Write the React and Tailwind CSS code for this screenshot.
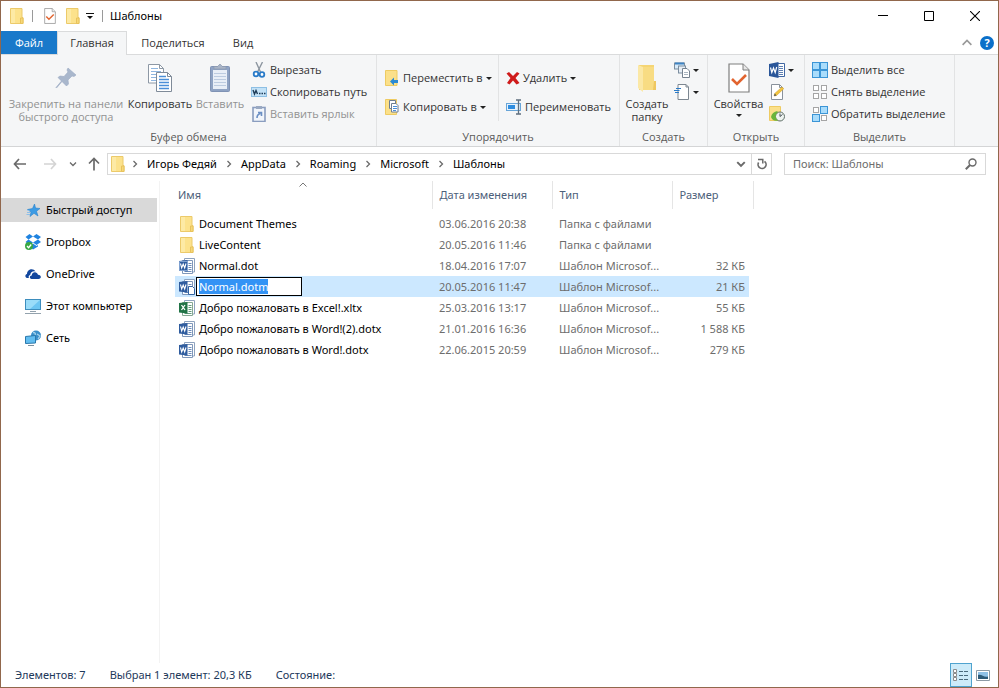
import React, { useEffect, useRef } from "react";

/* ---------- icons ---------- */

function Folder({ className = "h-4 w-3.5" }) {
  return (
    <svg viewBox="0 0 14 16" className={className} aria-hidden="true">
      <path d="M0.500 0.500h11.500v9h1v6H0.500z" fill="#fce28c" stroke="#ecca6a" />
      <path d="M1 1h4v14H1z" fill="#fdeaa5" />
      <path d="M10.500 10h2.500v5.500h-2.500z" fill="#f6d878" stroke="#e8c25c" />
    </svg>
  );
}

function BigFolder() {
  return (
    <svg viewBox="0 0 20 30" className="h-[30px] w-5" aria-hidden="true">
      <path d="M2 2h15v17h2v8H2z" fill="#f5d574" />
      <path d="M1 2l5 2v25l-5-4z" fill="#fbe8a6" />
      <path d="M6 4h11v15l2 1v7H6z" fill="#f8dc83" />
      <path d="M17 18h2v9h-3z" fill="#efc75f" />
    </svg>
  );
}

function CheckDoc({ className }) {
  return (
    <svg viewBox="0 0 22 30" className={className} aria-hidden="true">
      <path d="M1 1h14l6 6v22H1z" fill="#fff" stroke="#7e7e7e" strokeWidth="1.2" />
      <path d="M15 1v6h6" fill="#e8e8e8" stroke="#7e7e7e" />
      <path d="M4 16l5 5 9-9" fill="none" stroke="#e2642f" strokeWidth="2.6" />
    </svg>
  );
}

function Pin() {
  return (
    <svg viewBox="0 0 22 22" className="h-[22px] w-[22px]" aria-hidden="true">
      <path d="M13 1l8 7-2 1.500-2-.5-4 4 .5 4-2 2-4.500-4.500L1.500 21 1 20.500l5.500-6.500L3 10.500l2-1.500 4 .5 4-4.500-1-2z" fill="#a9b7cc" stroke="#9aa9c2" strokeWidth=".6" />
    </svg>
  );
}

function CopyBig() {
  return (
    <svg viewBox="0 0 26 30" className="h-[30px] w-[26px]" aria-hidden="true">
      <path d="M1.500 1.500h11l4 4v14.500h-15z" fill="#fff" stroke="#8d98a5" />
      <path d="M12.500 1.500v4h4" fill="none" stroke="#8d98a5" />
      <path d="M4 5.500h7M4 8.500h10M4 11.500h6M4 14.500h5M4 17.500h5" stroke="#8fb6e0" />
      <path d="M9.500 9.500h11l4 4v15h-15z" fill="#fff" stroke="#7f8b99" />
      <path d="M20.500 9.500v4h4" fill="none" stroke="#7f8b99" />
      <path d="M12 13.500h7M12 16.500h10M12 19.500h10M12 22.500h10M12 25.500h10" stroke="#4b8fd8" strokeWidth="1.300" />
    </svg>
  );
}

function PasteBig() {
  return (
    <svg viewBox="0 0 22 30" className="h-[30px] w-[22px]" aria-hidden="true">
      <rect x="1.500" y="3.500" width="19" height="25" rx="1" fill="#8fa3c4" stroke="#8093b5" />
      <rect x="4" y="7" width="14" height="19" fill="#e8eef7" />
      <path d="M5 10.500h12M5 13.500h12M5 16.500h12M5 19.500h12M5 22.500h12" stroke="#bccbe0" />
      <path d="M5 6V3.500h3.500L11 1l2.500 2.500H17V6z" fill="#a9b4c6" stroke="#8b99b0" strokeWidth=".7" />
    </svg>
  );
}

function Scissors() {
  return (
    <svg viewBox="0 0 16 16" className="size-4" aria-hidden="true">
      <path d="M5 0l4.500 10M11.500 0L6.500 10" stroke="#8d96a0" strokeWidth="1.400" fill="none" />
      <circle cx="5" cy="12" r="2.300" fill="#fff" stroke="#2a7bc8" strokeWidth="1.800" />
      <circle cx="11" cy="12.500" r="2.300" fill="#fff" stroke="#2a7bc8" strokeWidth="1.800" />
    </svg>
  );
}

function PathIcon() {
  return (
    <svg viewBox="0 0 16 16" className="size-4" aria-hidden="true">
      <rect x="0.500" y="3.500" width="15" height="9" fill="#c3e2f7" stroke="#8dbfe4" />
      <path d="M2 6l1.500 4L5 6.500 6.500 10" fill="none" stroke="#1d3b57" strokeWidth="1.400" />
      <path d="M8 9.500h1.500M10.500 9.500H12M13 9.500h1.500" stroke="#1d3b57" strokeWidth="1.500" />
    </svg>
  );
}

function PasteLink() {
  return (
    <svg viewBox="0 0 16 16" className="size-4" aria-hidden="true">
      <rect x="2" y="1.500" width="12" height="14" fill="#f1f5fb" stroke="#8a9dbf" strokeWidth="1.600" />
      <path d="M5 0h6v3H5z" fill="#9aa9c2" />
      <path d="M6 12c0-2.500 1-4 3.500-4.500M7 6.500h3.500v3.500" fill="none" stroke="#6b8fc4" strokeWidth="1.600" />
    </svg>
  );
}

function MoveTo() {
  return (
    <svg viewBox="0 0 16 16" className="size-4" aria-hidden="true">
      <path d="M1.500 .5h11.500v15H1.500z" fill="#fbe08a" stroke="#eecb62" />
      <path d="M6 11.500L10 7.500v2.500h4v3h-4v2.500z" fill="#2a8ad4" />
    </svg>
  );
}

function CopyTo() {
  return (
    <svg viewBox="0 0 16 16" className="size-4" aria-hidden="true">
      <path d="M1.500 .5h11v15h-11z" fill="#fbe08a" stroke="#eecb62" />
      <path d="M5.500 1.500h6v8h-6z" fill="#fff" stroke="#6e7f92" />
      <path d="M7.500 4.500h4.500l2 2v6.500h-6.500z" fill="#fff" stroke="#6e7f92" />
      <path d="M9 7.500h4M9 9.500h4M9 11.500h3" stroke="#4b8fd8" />
    </svg>
  );
}

function DeleteX() {
  return (
    <svg viewBox="0 0 14 14" className="size-3.5" aria-hidden="true">
      <path d="M3 1l4 4 4-4 2.500 1.500L9.500 7l4 5-3 1.500L7 9.500 3.500 13.500 1 12l3.500-5L.5 2.500z" fill="#cf1b1b" />
    </svg>
  );
}

function Rename() {
  return (
    <svg viewBox="0 0 16 16" className="size-4" aria-hidden="true">
      <rect x="0.500" y="4.500" width="14" height="7" fill="#e6f2fc" stroke="#68a5d8" />
      <rect x="2" y="6" width="7" height="4" fill="#2f8de0" />
      <path d="M10 1h5M10 15h5M12.500 1v14" stroke="#5f6f7f" strokeWidth="1.300" />
    </svg>
  );
}

function NewItem() {
  return (
    <svg viewBox="0 0 16 16" className="size-4" aria-hidden="true">
      <rect x="0.500" y="1" width="10" height="6" fill="#d8ebfa" stroke="#7b8d9f" />
      <path d="M1 1.500h9" stroke="#3e83c2" strokeWidth="2" />
      <rect x="4.500" y="4" width="7" height="7" fill="#e7eef5" stroke="#7b8d9f" />
      <path d="M8.500 6.500h4.500l2.500 2.500v6.500h-7z" fill="#fff" stroke="#76828f" />
      <path d="M10 10.500h4M10 12.500h4" stroke="#aab5c0" />
    </svg>
  );
}

function EasyAccess() {
  return (
    <svg viewBox="0 0 16 16" className="size-4" aria-hidden="true">
      <path d="M4 .5h8l2.500 2.500v12.500H4z" fill="#fff" stroke="#7d8791" />
      <path d="M12 .5v2.500h2.500" fill="none" stroke="#7d8791" />
      <path d="M2 4.500h5M0 6.500h5.500M1 8.500h4" stroke="#2a7bc8" strokeWidth="1.200" />
    </svg>
  );
}

function EditDoc() {
  return (
    <svg viewBox="0 0 16 16" className="size-4" aria-hidden="true">
      <path d="M2.500.5h8l3 3v12h-11z" fill="#fff" stroke="#8a929b" />
      <path d="M10.500.5v3h3" fill="none" stroke="#8a929b" />
      <path d="M5 12l.8-2.600L13 3l1.800 1.700L7.500 11.500z" fill="#f3c53d" stroke="#c9982a" strokeWidth=".5" />
      <path d="M5 12l.8-2.600 1.700 2z" fill="#555" />
    </svg>
  );
}

function HistoryIcon() {
  return (
    <svg viewBox="0 0 16 16" className="size-4" aria-hidden="true">
      <path d="M.5.5h11v14H.5z" fill="#fbe08a" stroke="#eecb62" />
      <circle cx="11" cy="10.500" r="4.500" fill="#eef3f0" stroke="#5f6f68" />
      <path d="M11 10.500l2.500-2M11 10.500V7.500" stroke="#4a545c" />
      <path d="M2 11C2.500 7.500 5 5.500 8.500 5v2C7 8 6.500 9.500 6.800 11c.2 1.500 1 2.500 2.200 3.500C5.500 15.500 3 14 2 11z" fill="#6ab53c" />
    </svg>
  );
}

function WordIcon() {
  return (
    <svg viewBox="0 0 16 16" className="size-4" aria-hidden="true">
      <path d="M8 1.500h7.500v13H8z" fill="#fff" stroke="#2a5699" strokeWidth=".9" />
      <path d="M10 4.500h4M10 6.500h4M10 8.500h4M10 10.500h4M10 12.500h4" stroke="#2a5699" opacity=".75" />
      <path d="M0 2l9.500-2v16L0 14z" fill="#2a5699" />
      <path d="M1.500 5.500l1.300 5 1.700-4.500 1.700 4.500 1.500-5.500" fill="none" stroke="#fff" strokeWidth="1.200" />
    </svg>
  );
}

function TemplateIcon({ kind }) {
  const dark = kind === "excel" ? "#217346" : "#2f5c9e";
  return (
    <svg viewBox="0 0 16 16" className="size-4 shrink-0" aria-hidden="true">
      <path d="M5.500.5h10v13.500h-10z" fill="#fff" stroke="#8ea3bf" />
      <path d="M3.500 2.500h10v13h-10z" fill="#fff" stroke={kind === "excel" ? "#86a894" : "#7f97ba"} />
      <path d="M9.500 5.500h3M9.500 7.500h3M9.500 9.500h3M9.500 11.500h3M5.500 13.500h7" stroke={dark} opacity=".7" />
      <path d="M0 3l8.500-1v11.500L0 12.500z" fill={dark} />
      {kind === "excel" ? (
        <path d="M2.500 5l3.500 5M6 5l-3.500 5" stroke="#fff" strokeWidth="1.300" />
      ) : (
        <path d="M1.500 5.500l1.200 4.500 1.500-4 1.500 4L7 5.500" fill="none" stroke="#fff" strokeWidth="1.100" />
      )}
      {kind === "macro" && <path d="M9.500 7.500h4l2 2v6h-6z" fill="#fff" stroke="#3465a4" />}
      {kind === "old" && <path d="M.5 3.500h8v9h-8z" fill="none" stroke="#7ea0d0" />}
    </svg>
  );
}

function GridIcon({ mode }) {
  const on = (i) => mode === "all" || (mode === "invert" && (i === 1 || i === 2));
  return (
    <svg viewBox="0 0 16 16" className="size-4" aria-hidden="true">
      {[0, 1, 2, 3].map((i) => {
        const big = on(i);
        const s = big ? 7 : 5;
        const x = (i % 2) * 8 + (big ? 0.5 : 1.5);
        const y = Math.floor(i / 2) * 8 + (big ? 0.5 : 1.5);
        return <rect key={i} x={x} y={y} width={s} height={s} fill={big ? "#a9dcfb" : "#fff"} stroke={big ? "#3b95d6" : "#a5a5a5"} />;
      })}
    </svg>
  );
}

function Star() {
  return (
    <svg viewBox="0 0 16 16" className="size-4" aria-hidden="true">
      <path d="M9.500 2l1 4 4.500.5-3.500 2.700 1.500 4.800-4-2.700L5 14.500l1-4.500-3.500-2.500L7.500 6.500z" fill="#3c9be4" stroke="#2782cc" strokeWidth=".6" />
      <path d="M2 10.500h3.500M1.500 12.500h3.500M2.500 8.500h2" stroke="#8dbfe8" />
    </svg>
  );
}

function DropboxIcon() {
  return (
    <svg viewBox="0 0 16 16" className="size-4" aria-hidden="true">
      <path d="M4.500 0L8 2.500 3.500 5.500.5 3zM11.500 0L16 3l-3 2.500L8 2.500zM.5 8l3-2.500L8 8.500 4.500 11zM16 8l-3-2.500-5 3 3.500 2.500zM8 9.500l3.500 2.500 1.500-1v1.500L8 15.500 5 13z" fill="#1f83e0" />
      <circle cx="4" cy="12" r="4" fill="#39a845" />
      <path d="M2 12l1.600 1.700L6.200 10.500" fill="none" stroke="#fff" strokeWidth="1.300" />
    </svg>
  );
}

function CloudIcon() {
  return (
    <svg viewBox="0 0 16 16" className="size-4" aria-hidden="true">
      <path d="M2 12C0 11.500-.3 8.500 2 8 2 3.500 8 1.500 10.500 5.500 7.500 4.800 5.500 6.500 5.200 9 3.500 9.500 3.300 11.300 4 12z" fill="#12479e" />
      <path d="M6.500 13c-2.500-.3-2-3.500.2-3.500C7 5.500 12 5 13 8.800c3.700 0 3.700 4.200.5 4.200z" fill="#12479e" />
    </svg>
  );
}

function ComputerIcon() {
  return (
    <svg viewBox="0 0 16 16" className="size-4" aria-hidden="true">
      <rect x=".5" y="1.500" width="15" height="10" fill="#6cc5f2" stroke="#3d8dbd" />
      <path d="M1 2h14L5 11H1z" fill="#9adcf9" />
      <path d="M5 13.500h6M0 15.500h16" stroke="#93a2ad" />
    </svg>
  );
}

function NetworkIcon() {
  return (
    <svg viewBox="0 0 16 16" className="size-4" aria-hidden="true">
      <circle cx="11" cy="5.500" r="5" fill="#3a8fc9" />
      <path d="M8 2.500c2 0 3 1 2 2.500M12 4l3 2-2 3" stroke="#a7d3ec" fill="none" strokeWidth="1.300" />
      <path d="M.5 6.500l10-1v7.500l-10 .5z" fill="#62bdf0" stroke="#2a78ac" />
      <path d="M3 15.500h6" stroke="#7d909e" />
    </svg>
  );
}

function Caret() {
  return (
    <svg viewBox="0 0 6 3" className="h-[3px] w-[6px]" aria-hidden="true">
      <path d="M0 0h6L3 3z" fill="#222" />
    </svg>
  );
}

function Chevron({ dir = "right", className = "size-2", weight = 1.3 }) {
  const d = { right: "M2.500 1l3 3-3 3", down: "M1 2.500l3 3 3-3", up: "M0.500 5.500L4 2l3.500 3.500" }[dir];
  return (
    <svg viewBox="0 0 8 8" className={className} aria-hidden="true">
      <path d={d} fill="none" stroke="currentColor" strokeWidth={weight} />
    </svg>
  );
}

function Arrow({ d }) {
  return (
    <svg viewBox="0 0 14 14" className="size-3.5" aria-hidden="true">
      <path d={d} fill="none" stroke="currentColor" strokeWidth="1.700" />
    </svg>
  );
}

/* ---------- ribbon parts ---------- */

function Group({ label, className, children }) {
  return (
    <section className={`flex shrink-0 flex-col border-r border-[#e2e3e4] ${className}`} aria-label={label}>
      <div className="flex h-[74px] items-start">{children}</div>
      <div className="text-center leading-4 text-[#5a5a5a]">{label}</div>
    </section>
  );
}

function BigButton({ icon, label, className, disabled, caret }) {
  return (
    <button type="button" disabled={disabled} className={`flex shrink-0 flex-col items-center pt-2 leading-[13px] ${disabled ? "text-[#929292]" : "text-[#333]"} ${className}`}>
      <span className="flex h-[34px] items-start justify-center">{icon}</span>
      <span>{label}</span>
      {caret && (
        <span className="pt-1">
          <Caret />
        </span>
      )}
    </button>
  );
}

function SmallButton({ icon, label, disabled, caret, name }) {
  return (
    <button type="button" disabled={disabled} aria-label={name} className={`flex h-[22px] items-center gap-[3px] whitespace-nowrap ${disabled ? "text-[#929292]" : "text-[#333]"}`}>
      {icon}
      {label && <span>{label}</span>}
      {caret && <Caret />}
    </button>
  );
}

/* ---------- data ---------- */

const crumbs = ["Игорь Федяй", "AppData", "Roaming", "Microsoft", "Шаблоны"];

const places = [
  { name: "Быстрый доступ", icon: <Star />, active: true },
  { name: "Dropbox", icon: <DropboxIcon /> },
  { name: "OneDrive", icon: <CloudIcon /> },
  { name: "Этот компьютер", icon: <ComputerIcon /> },
  { name: "Сеть", icon: <NetworkIcon /> },
];

const files = [
  { name: "Document Themes", date: "03.06.2016 20:38", type: "Папка с файлами", size: "", kind: "folder" },
  { name: "LiveContent", date: "20.05.2016 11:46", type: "Папка с файлами", size: "", kind: "folder" },
  { name: "Normal.dot", date: "18.04.2016 17:07", type: "Шаблон Microsof...", size: "32 КБ", kind: "old" },
  { name: "Normal.dotm", date: "20.05.2016 11:47", type: "Шаблон Microsof...", size: "21 КБ", kind: "macro", editing: true },
  { name: "Добро пожаловать в Excel!.xltx", date: "25.03.2016 13:17", type: "Шаблон Microsof...", size: "55 КБ", kind: "excel" },
  { name: "Добро пожаловать в Word!(2).dotx", date: "21.01.2016 16:36", type: "Шаблон Microsof...", size: "1 588 КБ", kind: "word" },
  { name: "Добро пожаловать в Word!.dotx", date: "22.06.2015 20:59", type: "Шаблон Microsof...", size: "279 КБ", kind: "word" },
];

function RenameBox({ value }) {
  const ref = useRef(null);
  useEffect(() => {
    ref.current.focus();
    ref.current.select();
  }, []);
  return (
    <input
      ref={ref}
      aria-label="Новое имя файла"
      defaultValue={value}
      className="h-[19px] w-[106px] border border-black bg-white px-0.5 text-black outline-none selection:bg-[#3393f5] selection:text-white"
    />
  );
}

/* ---------- window ---------- */

export default function App() {
  return (
    <div className="flex min-h-screen flex-col overflow-hidden border border-[#91674c] bg-white font-['Noto_Sans','Open_Sans',sans-serif] text-[11px] leading-4 text-black">
      <header className="flex h-[30px] items-center">
        <div className="flex items-center pl-[9px]">
          <Folder />
          <span className="ml-2 h-3 w-px bg-[#9a9a9a]" />
          <button type="button" aria-label="Свойства" className="ml-[11px]">
            <CheckDoc className="h-4 w-3" />
          </button>
          <button type="button" aria-label="Новая папка" className="ml-2.5">
            <Folder />
          </button>
          <button type="button" aria-label="Настройка панели быстрого доступа" className="ml-1.5">
            <svg viewBox="0 0 8 8" className="size-2" aria-hidden="true">
              <path d="M0 1.500h8" stroke="#111" />
              <path d="M1 4h6L4 7z" fill="#111" />
            </svg>
          </button>
          <span className="ml-2 h-3 w-px bg-[#9a9a9a]" />
        </div>
        <h1 className="pl-[7px]">Шаблоны</h1>
        <div className="ml-auto flex h-full">
          <button type="button" aria-label="Свернуть" className="flex w-[46px] items-center justify-center">
            <svg viewBox="0 0 10 10" className="size-2.5"><path d="M0 4.500h10" stroke="#000" /></svg>
          </button>
          <button type="button" aria-label="Развернуть" className="flex w-[46px] items-center justify-center">
            <svg viewBox="0 0 10 10" className="size-2.5"><path d="M.5.5h9v9h-9z" fill="none" stroke="#000" /></svg>
          </button>
          <button type="button" aria-label="Закрыть" className="flex w-[46px] items-center justify-center">
            <svg viewBox="0 0 10 10" className="size-2.5"><path d="M0 0l10 10M10 0L0 10" stroke="#000" strokeWidth="1.100" /></svg>
          </button>
        </div>
      </header>

      <div className="font-['Open_Sans','Noto_Sans',sans-serif]">
        <nav className="flex h-6 items-stretch border-b border-[#dadbdc] text-[#333]" aria-label="Лента">
          <button type="button" className="w-14 bg-[#1979ca] text-white">Файл</button>
          <button type="button" className="-mb-px w-[70px] border border-b-0 border-[#dadbdc] bg-[#f5f6f7] pb-0.5">Главная</button>
          <button type="button" className="w-[92px]">Поделиться</button>
          <button type="button" className="w-12">Вид</button>
          <div className="ml-auto flex items-center gap-2 pr-1">
            <button type="button" aria-label="Свернуть ленту" className="text-[#999]">
              <Chevron dir="up" className="size-2.5" />
            </button>
            <button type="button" aria-label="Справка" className="flex size-3.5 items-center justify-center rounded-full bg-[#0a6fc9] font-bold text-white">
              ?
            </button>
          </div>
        </nav>

        <div className="flex h-[92px] overflow-hidden border-b border-[#d4d5d6] bg-[#f5f6f7]">
          <Group label="Буфер обмена" className="w-[376px]">
            <BigButton className="w-[130px] px-1" disabled icon={<span className="pt-1"><Pin /></span>} label="Закрепить на панели быстрого доступа" />
            <BigButton className="w-[58px] whitespace-nowrap" icon={<CopyBig />} label="Копировать" />
            <BigButton className="w-[62px]" disabled icon={<PasteBig />} label="Вставить" />
            <div className="pt-1">
              <SmallButton icon={<Scissors />} label="Вырезать" />
              <SmallButton icon={<PathIcon />} label="Скопировать путь" />
              <SmallButton icon={<PasteLink />} label="Вставить ярлык" disabled />
            </div>
          </Group>
          <Group label="Упорядочить" className="w-[243px]">
            <div className="flex h-[66px] w-[122px] flex-col gap-[7px] border-r border-[#e2e3e4] pl-[7px] pt-3">
              <SmallButton icon={<MoveTo />} label="Переместить в" caret />
              <SmallButton icon={<CopyTo />} label="Копировать в" caret />
            </div>
            <div className="flex flex-col gap-[7px] pl-[7px] pt-3">
              <SmallButton icon={<DeleteX />} label="Удалить" caret />
              <SmallButton icon={<Rename />} label="Переименовать" />
            </div>
          </Group>
          <Group label="Создать" className="w-[88px]">
            <BigButton className="w-[54px]" icon={<BigFolder />} label="Создать папку" />
            <div className="pt-1">
              <SmallButton icon={<NewItem />} name="Создать элемент" caret />
              <SmallButton icon={<EasyAccess />} name="Простой доступ" caret />
            </div>
          </Group>
          <Group label="Открыть" className="w-[97px]">
            <BigButton className="w-[61px]" icon={<CheckDoc className="h-[30px] w-[22px]" />} label="Свойства" caret />
            <div className="pt-1">
              <SmallButton icon={<WordIcon />} name="Открыть" caret />
              <SmallButton icon={<EditDoc />} name="Изменить" />
              <SmallButton icon={<HistoryIcon />} name="Журнал" />
            </div>
          </Group>
          <Group label="Выделить" className="w-[150px]">
            <div className="pl-[7px] pt-1">
              <SmallButton icon={<GridIcon mode="all" />} label="Выделить все" />
              <SmallButton icon={<GridIcon mode="none" />} label="Снять выделение" />
              <SmallButton icon={<GridIcon mode="invert" />} label="Обратить выделение" />
            </div>
          </Group>
        </div>
      </div>

      <div className="flex h-[34px] items-center pl-3 pr-3 text-[#6a6a6a]">
        <button type="button" aria-label="Назад"><Arrow d="M13 7H1.500M6 2L1.500 7 6 12" /></button>
        <button type="button" aria-label="Вперёд" className="ml-4 text-[#d4d4d4]"><Arrow d="M1 7h11.500M8 2l4.500 5L8 12" /></button>
        <button type="button" aria-label="Последние расположения" className="ml-3"><Chevron dir="down" /></button>
        <button type="button" aria-label="Вверх" className="ml-2.5"><Arrow d="M7 13.500V1.500M2 6.500L7 1.500l5 5" /></button>
        <div className="ml-1.5 flex h-[22px] flex-1 items-stretch border border-[#d9d9d9]">
          <div className="flex flex-1 items-center gap-1.5 pl-[3px]">
            <Folder />
            <div className="flex items-center gap-2">
              {crumbs.map((c) => (
                <React.Fragment key={c}>
                  <Chevron />
                  <a href="#" className="text-black">{c}</a>
                </React.Fragment>
              ))}
            </div>
          </div>
          <button type="button" aria-label="Предыдущие расположения" className="flex w-[21px] items-center justify-center">
            <Chevron dir="down" className="size-2.5" weight={1.6} />
          </button>
          <button type="button" aria-label="Обновить" className="flex w-5 items-center justify-center border-l border-[#d9d9d9]">
            <svg viewBox="0 0 12 12" className="size-3">
              <path d="M2.600 4.500A4 4 0 1 0 8.500 3.300" fill="none" stroke="currentColor" strokeWidth="1.600" />
              <path d="M2 1.500h5.500M6.800 1.500v4" fill="none" stroke="currentColor" strokeWidth="1.500" />
            </svg>
          </button>
        </div>
        <label className="ml-3 flex h-[22px] w-[202px] items-center border border-[#d9d9d9] px-2">
          <input type="search" aria-label="Поиск" placeholder="Поиск: Шаблоны" className="min-w-0 flex-1 bg-transparent outline-none placeholder:text-[#6d6d6d]" />
          <svg viewBox="0 0 12 12" className="size-3" aria-hidden="true">
            <circle cx="7.500" cy="4.500" r="3.500" fill="none" stroke="#6a6a6a" strokeWidth="1.400" />
            <path d="M5 7L.8 11.200" stroke="#6a6a6a" strokeWidth="2" />
          </svg>
        </label>
      </div>

      <main className="flex flex-1">
        <aside className="w-[159px] shrink-0 border-r border-[#f3f3f3] pr-0.5 pt-[17px]">
          <ul className="flex flex-col gap-2">
            {places.map((p) => (
              <li key={p.name}>
                <a href="#" className={`flex h-6 items-center gap-[5px] pl-6 ${p.active ? "bg-[#d9d9d9]" : ""}`}>
                  {p.icon}
                  <span>{p.name}</span>
                </a>
              </li>
            ))}
          </ul>
        </aside>

        <div className="min-w-0 flex-1 pl-[15px]">
          <table className="w-[578px] table-fixed border-collapse text-left">
            <colgroup>
              <col className="w-[257px]" />
              <col className="w-[120px]" />
              <col className="w-[120px]" />
              <col className="w-[77px]" />
              <col className="w-1" />
            </colgroup>
            <thead>
              <tr className="h-7 text-[#4c607a]">
                <th aria-sort="ascending" className="relative border-r border-[#e5e5e5] px-[3px] font-normal">
                  Имя
                  <span className="absolute left-1/2 top-0 -translate-x-1/2 text-[#777]">
                    <Chevron dir="up" className="size-2" weight={1} />
                  </span>
                </th>
                <th className="border-r border-[#e5e5e5] px-[7px] font-normal">Дата изменения</th>
                <th className="border-r border-[#e5e5e5] px-[7px] font-normal">Тип</th>
                <th colSpan={2} className="border-r border-[#e5e5e5] px-[7px] font-normal">Размер</th>
              </tr>
            </thead>
            <tbody>
              <tr className="h-1" aria-hidden="true"><td colSpan={5} /></tr>
              {files.map((f) => {
                const bg = f.editing ? "bg-[#cce8ff]" : "";
                return (
                  <tr key={f.name} className="h-[21px] whitespace-nowrap text-[#6d6d6d]">
                    <td className={`p-0 ${bg}`}>
                      <div className={`flex items-center pl-1 text-black ${f.editing ? "gap-px" : "gap-1"}`}>
                        {f.kind === "folder" ? <span className="flex w-4 justify-center"><Folder /></span> : <TemplateIcon kind={f.kind} />}
                        {f.editing ? <RenameBox value={f.name} /> : <span>{f.name}</span>}
                      </div>
                    </td>
                    <td className={`p-0 pl-[7px] ${bg}`}>{f.date}</td>
                    <td className={`p-0 pl-[7px] ${bg}`}>{f.type}</td>
                    <td className={`p-0 pr-1 text-right ${bg}`}>{f.size}</td>
                    <td className="p-0" />
                  </tr>
                );
              })}
            </tbody>
          </table>
        </div>
      </main>

      <footer className="flex h-6 items-center pl-3.5 text-[#1e395b]">
        <div className="flex gap-6">
          <span>Элементов: 7</span>
          <span>Выбран 1 элемент: 20,3 КБ</span>
          <span>Состояние:</span>
        </div>
        <div className="ml-auto flex items-center gap-1 pr-2">
          <button type="button" aria-label="Таблица" aria-pressed="true" className="flex h-6 w-[22px] items-center justify-center border border-[#4fa3cf] bg-[#cdebf9]">
            <svg viewBox="0 0 16 14" className="h-3.5 w-4">
              <path d="M.5 1.500h3v3h-3zM.5 5.500h3v3h-3zM.5 9.500h3v3h-3z" fill="#fff" stroke="#8c8c8c" />
              <path d="M6 3.500h4M11 3.500h4M6 7.500h4M11 7.500h4M6 11.500h4M11 11.500h4" stroke="#4a6a7c" />
            </svg>
          </button>
          <button type="button" aria-label="Крупные значки">
            <svg viewBox="0 0 14 11" className="h-[11px] w-3.5">
              <path d="M.5.5h13v10H.5z" fill="#fff" stroke="#8c9aa5" />
              <path d="M2 2h10v7H2z" fill="#8fc1e6" />
              <path d="M2 5c4-1 6 3 10 1.500V9H2z" fill="#2c5a78" />
            </svg>
          </button>
        </div>
      </footer>
    </div>
  );
}
